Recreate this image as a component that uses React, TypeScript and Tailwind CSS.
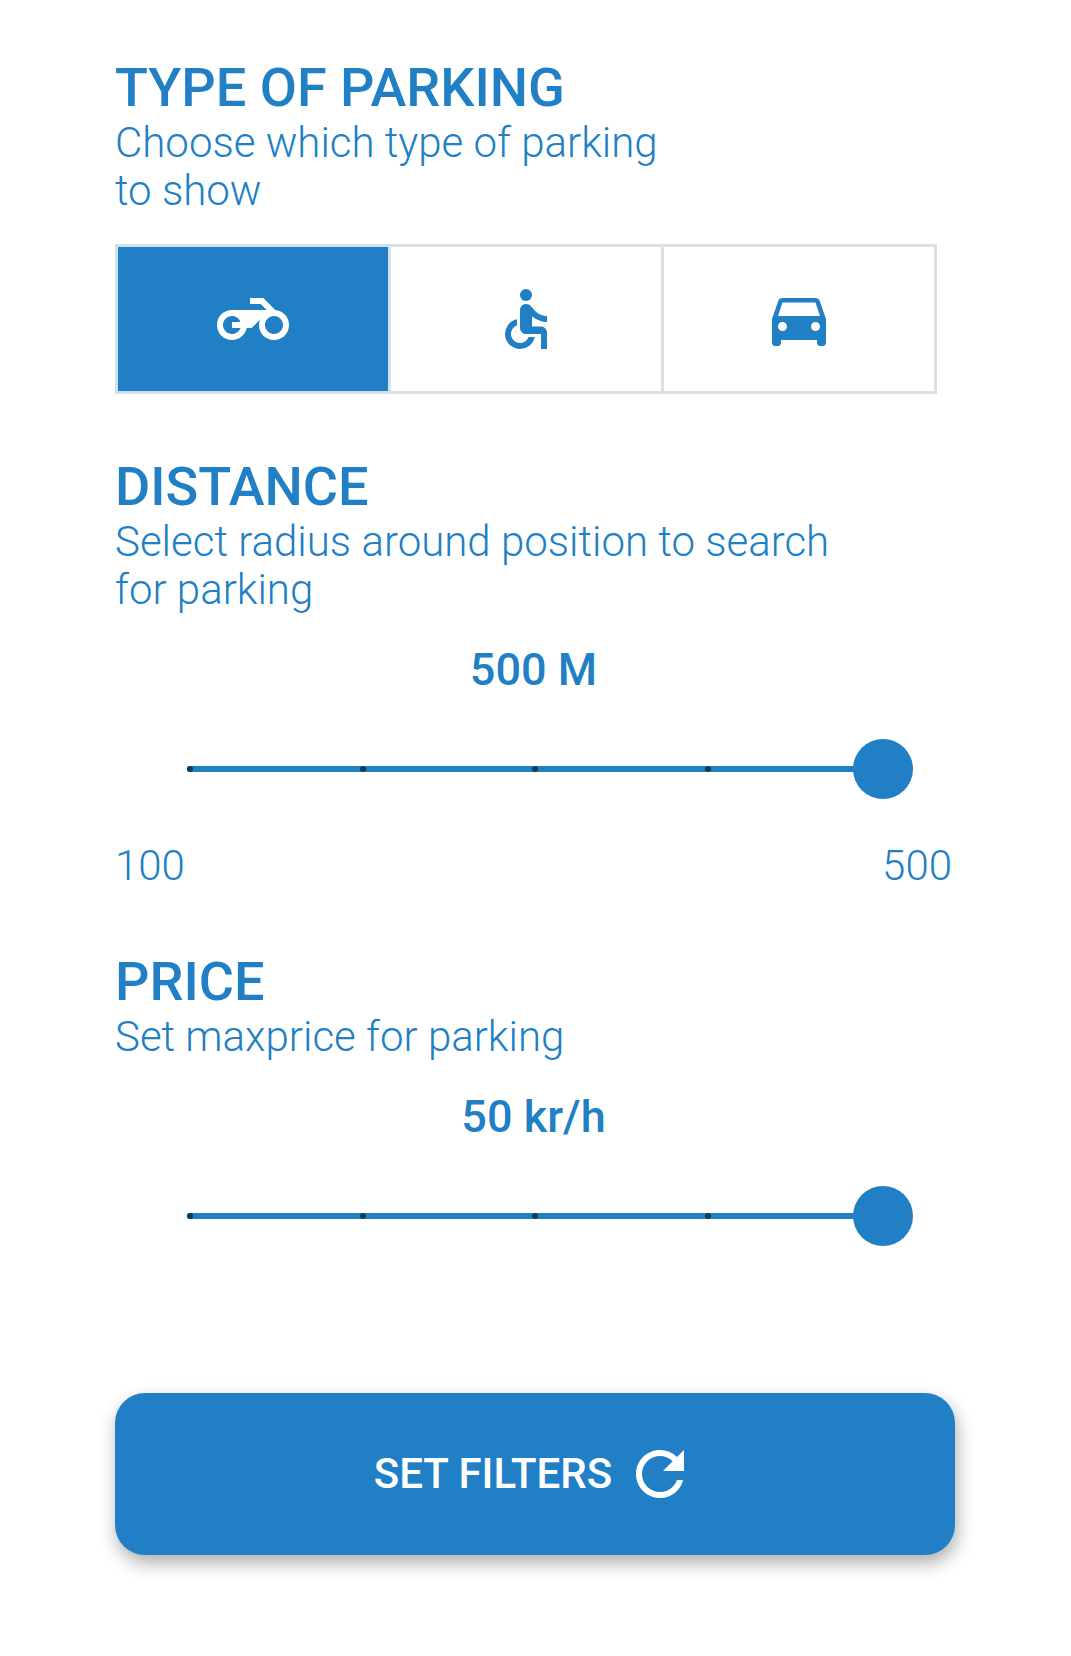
import { useState, type ReactNode } from "react";
import { MdAccessible, MdDirectionsCar, MdRefresh } from "react-icons/md";

function MotorcycleIcon({ className }: { className?: string }) {
  return (
    <svg viewBox="0 0 24 24" fill="currentColor" aria-hidden="true" className={className}>
      <path d="M19.44 9.03L15.41 5H11v2h3.59l2 2H5c-2.8 0-5 2.2-5 5s2.2 5 5 5c2.46 0 4.45-1.69 4.9-4h1.65l2.77-2.77c-.21.54-.32 1.14-.32 1.77 0 2.8 2.2 5 5 5s5-2.2 5-5c0-2.65-1.97-4.77-4.56-4.97zM7.82 15C7.4 16.15 6.28 17 5 17c-1.63 0-3-1.37-3-3s1.37-3 3-3c1.28 0 2.4.85 2.82 2H5v2h2.82zM19 17c-1.66 0-3-1.34-3-3s1.34-3 3-3 3 1.34 3 3-1.34 3-3 3z" />
    </svg>
  );
}

const parkingTypes = [
  { id: "motorcycle", label: "Motorcycle", Icon: MotorcycleIcon },
  { id: "accessible", label: "Accessible", Icon: MdAccessible },
  { id: "car", label: "Car", Icon: MdDirectionsCar },
];

function SectionHeader({ title, children }: { title: string; children: ReactNode }) {
  return (
    <header>
      <h2 className="text-[54px] leading-[62px] font-medium">{title}</h2>
      <p className="text-[42px] leading-[48px] font-light">{children}</p>
    </header>
  );
}

type StepSliderProps = {
  label: string;
  min: number;
  max: number;
  step: number;
  value: number;
  onChange: (value: number) => void;
};

function StepSlider({ label, min, max, step, value, onChange }: StepSliderProps) {
  const stops = Array.from({ length: (max - min) / step + 1 }, (_, i) => min + i * step);
  return (
    <div className="relative mt-[42px] mr-[42px] ml-[45px] h-[60px]">
      <div className="absolute inset-y-0 right-[30px] left-[27px] flex items-center">
        <div className="flex h-[6px] w-full justify-between rounded-full bg-[#217fc5]">
          {stops.map((stop) => (
            <span key={stop} className="size-[6px] rounded-full bg-[#0f3b5c]" />
          ))}
        </div>
      </div>
      <input
        type="range"
        aria-label={label}
        min={min}
        max={max}
        step={step}
        value={value}
        onChange={(e) => onChange(Number(e.target.value))}
        className="relative block h-[60px] w-full cursor-pointer appearance-none bg-transparent [&::-webkit-slider-thumb]:size-[60px] [&::-webkit-slider-thumb]:appearance-none [&::-webkit-slider-thumb]:rounded-full [&::-webkit-slider-thumb]:bg-[#217fc5]"
      />
    </div>
  );
}

export default function App() {
  const [type, setType] = useState("motorcycle");
  const [distance, setDistance] = useState(500);
  const [price, setPrice] = useState(50);

  return (
    <main className="min-h-screen bg-white pt-[57px] pr-[116px] pb-[100px] pl-[115px] font-['Roboto',sans-serif] text-[#217fc5]">
      <section>
        <SectionHeader title="TYPE OF PARKING">
          Choose which type of parking
          <br />
          to show
        </SectionHeader>
        <div
          role="group"
          aria-label="Type of parking"
          className="mt-[29px] mr-[18px] grid grid-cols-3 gap-[3px] bg-[#dfdfdf] p-[3px]"
        >
          {parkingTypes.map(({ id, label, Icon }) => (
            <button
              key={id}
              type="button"
              aria-label={label}
              aria-pressed={type === id}
              onClick={() => setType(id)}
              className="flex h-36 cursor-pointer items-center justify-center bg-white aria-pressed:bg-[#217fc5] aria-pressed:text-white aria-pressed:ring-[3px] aria-pressed:ring-[#d3e1ec]"
            >
              <Icon className="size-[72px]" />
            </button>
          ))}
        </div>
      </section>

      <section className="mt-[62px]">
        <SectionHeader title="DISTANCE">
          Select radius around position to search
          <br />
          for parking
        </SectionHeader>
        <p className="mt-[29px] mr-[3px] text-center text-[45px] leading-[54px] font-medium">{distance} M</p>
        <StepSlider label="Distance" min={100} max={500} step={100} value={distance} onChange={setDistance} />
        <div className="mt-[42px] mr-[3px] flex justify-between text-[42px] leading-[50px] font-light">
          <span>100</span>
          <span>500</span>
        </div>
      </section>

      <section className="mt-[60px]">
        <SectionHeader title="PRICE">Set maxprice for parking</SectionHeader>
        <p className="mt-[29px] mr-[3px] text-center text-[45px] leading-[54px] font-medium">{price} kr/h</p>
        <StepSlider label="Max price" min={10} max={50} step={10} value={price} onChange={setPrice} />
      </section>

      <button
        type="button"
        className="mt-[147px] flex h-[162px] w-full cursor-pointer items-center justify-center gap-3 rounded-[30px] bg-[#217fc5] text-[42px] leading-[48px] font-medium text-white shadow-[2px_8px_18px_rgba(0,0,0,0.32)]"
      >
        SET FILTERS
        <MdRefresh className="size-[72px]" />
      </button>
    </main>
  );
}
